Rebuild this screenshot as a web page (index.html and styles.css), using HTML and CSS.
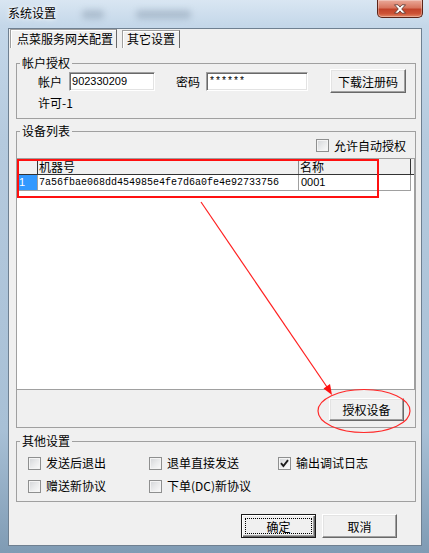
FILE: index.html
```html
<!DOCTYPE html>
<html lang="zh-CN">
<head>
    <meta charset="UTF-8">
    <meta name="viewport" content="width=device-width, initial-scale=1.0">
    <title>系统设置</title>
    <link rel="stylesheet" href="styles.css">
</head>
<body>
    <div class="window">
        <div class="titlebar">
            <span class="title">系统设置</span>
            <span class="smudge smudge-a"></span>
            <span class="smudge smudge-b"></span>
            <button class="close-btn" type="button" aria-label="关闭">
                <svg width="14" height="10" viewBox="0 0 14 10"><path d="M1.5 0.8 H5 L7 3.1 L9 0.8 H12.5 L8.7 5 L12.5 9.2 H9 L7 6.9 L5 9.2 H1.5 L5.3 5 Z" fill="#fff" stroke="#53302a" stroke-width="0.8"/></svg>
            </button>
        </div>

        <div class="client">
            <div class="tabs">
                <span class="tab active">点菜服务网关配置</span>
                <span class="tab">其它设置</span>
            </div>

            <div class="panel">
                <fieldset class="group account">
                    <legend>帐户授权</legend>
                    <div class="account-row">
                        <label for="account">帐户</label>
                        <input id="account" class="field field-account" type="text" value="902330209">
                        <label for="password" class="pwd-label">密码</label>
                        <input id="password" class="field field-pwd" type="text" value="******">
                        <button class="btn btn-download" type="button">下载注册码</button>
                    </div>
                    <div class="license">许可-1</div>
                </fieldset>

                <fieldset class="group devices">
                    <legend>设备列表</legend>
                    <div class="auto-row">
                        <span class="cb"></span>
                        <span>允许自动授权</span>
                    </div>
                    <div class="list">
                        <div class="grid-row grid-head">
                            <span class="cell rowhead"></span>
                            <span class="cell">机器号</span>
                            <span class="cell last">名称</span>
                        </div>
                        <div class="grid-row grid-data">
                            <span class="cell rowhead">1</span>
                            <span class="cell mono">7a56fbae068dd454985e4fe7d6a0fe4e92733756</span>
                            <span class="cell num">0001</span>
                        </div>
                    </div>
                    <div class="auth-row">
                        <button class="btn btn-auth" type="button">授权设备</button>
                    </div>
                </fieldset>

                <fieldset class="group other">
                    <legend>其他设置</legend>
                    <div class="opts">
                        <div class="opt"><span class="cb"></span><span>发送后退出</span></div>
                        <div class="opt"><span class="cb"></span><span>退单直接发送</span></div>
                        <div class="opt">
                            <span class="cb"><svg width="9" height="9" viewBox="0 0 9 9"><path d="M1 4.2 L3.4 7 L8 1.2" fill="none" stroke="#1b1b1b" stroke-width="1.9"/></svg></span>
                            <span>输出调试日志</span>
                        </div>
                        <div class="opt"><span class="cb"></span><span>赠送新协议</span></div>
                        <div class="opt"><span class="cb"></span><span>下单(DC)新协议</span></div>
                    </div>
                </fieldset>

                <div class="actions">
                    <button class="btn btn-ok default" type="button">确定</button>
                    <button class="btn btn-cancel" type="button">取消</button>
                </div>
            </div>
        </div>

        <!-- red marks drawn over the dialog -->
        <svg class="marks" width="429" height="553" viewBox="0 0 429 553">
            <rect x="18" y="160" width="360" height="37" fill="none" stroke="#ff1010" stroke-width="2"/>
            <line x1="201" y1="202" x2="327" y2="387" stroke="#ff2020" stroke-width="1.2"/>
            <polygon points="332,395 323.5,388.5 330,384" fill="#ff1010"/>
            <ellipse cx="364" cy="411" rx="46" ry="21.5" fill="none" stroke="#ff2a2a" stroke-width="1.2"/>
        </svg>
    </div>
</body>
</html>
```

FILE: styles.css
```css
* {
    box-sizing: border-box;
}
body {
    margin: 0;
    font-family: "Noto Sans CJK SC", sans-serif;
    font-size: 12px;
    color: #000;
}
.window {
    position: relative;
    width: 429px;
    height: 553px;
    padding: 0 7px 7px 8px;
    display: flex;
    flex-direction: column;
    background: linear-gradient(180deg, #d9e6f2 0, #c4d7e9 26px, #b5cade 140px, #a8c0d6 430px, #7f9bb4 553px);
}
.titlebar {
    height: 28px;
    display: flex;
    align-items: flex-start;
}
.title {
    margin-top: 5px;
    line-height: 16px;
    text-shadow: 0 0 6px #fff, 0 0 3px #fff;
}
.smudge {
    display: block;
    height: 9px;
    margin-top: 10px;
    background: rgba(95, 115, 140, 0.3);
    filter: blur(3px);
    border-radius: 4px;
}
.smudge-a {
    width: 22px;
    margin-left: 26px;
}
.smudge-b {
    width: 55px;
    margin-left: 32px;
}
.close-btn {
    margin-left: auto;
    margin-right: -1px;
    width: 46px;
    height: 18px;
    padding: 0;
    border: 1px solid #5b2418;
    border-top: none;
    border-radius: 0 0 5px 5px;
    background: linear-gradient(180deg, #eaa999 0, #d8765f 45%, #c2432a 55%, #cd5336 80%, #e48b69 100%);
    box-shadow: inset 0 0 0 1px rgba(255, 255, 255, 0.3);
    display: flex;
    align-items: center;
    justify-content: center;
}
.client {
    flex: 1;
    border: 1px solid #6f8091;
    background: #f0f0f0;
    display: flex;
    flex-direction: column;
}
.tabs {
    display: flex;
    align-items: flex-end;
    gap: 5px;
    height: 19px;
    padding-left: 1px;
}
.tab {
    height: 18px;
    line-height: 16px;
    padding: 0 4px;
    border: 1px solid #a0a0a0;
    border-right-color: #696969;
    border-bottom: none;
    box-shadow: inset 1px 1px #fff;
    background: #f0f0f0;
}
.tab.active {
    height: 19px;
    line-height: 17px;
    padding: 0 3px 0 6px;
}
.panel {
    flex: 1;
    padding: 0 5px 0 7px;
}
.group {
    margin: 0;
    padding: 0;
    min-width: 0;
    border: 1px solid #a0a0a0;
}
.group legend {
    margin-left: 3px;
    padding: 0 2px;
    line-height: 14px;
}
.account {
    margin-top: 8px;
}
.account-row {
    display: flex;
    align-items: center;
    height: 24px;
    margin-top: -1px;
    padding-left: 21px;
}
.field {
    height: 19px;
    padding: 0 2px;
    border: 1px solid;
    border-color: #a0a0a0 #fff #fff #a0a0a0;
    box-shadow: inset 1px 1px #696969, inset -1px -1px #e3e3e3;
    background: #fff;
    font-family: "Liberation Sans", sans-serif;
    font-size: 11px;
    color: #000;
}
.field-account {
    width: 86px;
    margin-left: 7px;
}
.pwd-label {
    margin-left: 21px;
}
.field-pwd {
    width: 102px;
    margin-left: 6px;
    font-family: "Liberation Mono", monospace;
    font-size: 10px;
}
.btn {
    height: 24px;
    padding: 0;
    border: 1px solid;
    border-color: #fff #696969 #696969 #fff;
    box-shadow: inset -1px -1px #a0a0a0, inset 1px 1px #e3e3e3;
    background: #f0f0f0;
    font-family: "Noto Sans CJK SC", sans-serif;
    font-size: 12px;
    color: #000;
}
.btn-download {
    width: 76px;
    margin-left: 22px;
}
.license {
    margin-top: 3px;
    padding: 0 0 8px 21px;
    line-height: 14px;
}
.devices {
    margin-top: 5px;
}
.auto-row {
    display: flex;
    justify-content: flex-end;
    align-items: center;
    gap: 5px;
    height: 14px;
    padding-right: 9px;
}
.cb {
    width: 13px;
    height: 13px;
    flex: none;
    border: 1px solid #8e8f8f;
    background: linear-gradient(135deg, #d2d4d7 0, #e9eaeb 50%, #fbfbfb 100%);
    box-shadow: inset 0 0 0 1px #f4f4f4;
    display: flex;
    align-items: center;
    justify-content: center;
}
.list {
    height: 232px;
    margin-top: 6px;
    background: #fff;
    border: 1px solid #a0a0a0;
    border-left: none;
}
.grid-row {
    display: grid;
    grid-template-columns: 21px 261px 112px;
    height: 16px;
}
.cell {
    padding-left: 1px;
    line-height: 15px;
    white-space: nowrap;
    overflow: hidden;
}
.grid-head {
    background: #f0f0f0;
    border-bottom: 1px solid #333;
}
.grid-head .cell {
    border-right: 1px solid #8a8a8a;
}
.grid-head .rowhead,
.grid-head .last {
    border-right-color: #333;
}
.grid-data .cell {
    border-right: 1px solid #a0a0a0;
    border-bottom: 1px solid #a0a0a0;
}
.grid-data .rowhead {
    padding-left: 2px;
    background: #3399ff;
    color: #fff;
    font-family: "Liberation Sans", sans-serif;
    font-size: 11px;
}
.mono {
    font-family: "Liberation Mono", monospace;
    font-size: 10px;
}
.num {
    padding-left: 2px;
    font-family: "Liberation Sans", sans-serif;
    font-size: 11px;
}
.auth-row {
    display: flex;
    justify-content: flex-end;
    margin-top: 8px;
    padding: 0 11px 6px 0;
}
.btn-auth {
    width: 75px;
    height: 23px;
}
.other {
    margin-top: 6px;
}
.opts {
    display: grid;
    grid-template-columns: 121px 129px auto;
    row-gap: 9px;
    padding: 8px 0 8px 11px;
}
.opt {
    display: flex;
    align-items: center;
    gap: 5px;
    height: 14px;
    line-height: 14px;
}
.actions {
    display: flex;
    justify-content: flex-end;
    gap: 6px;
    margin-top: 12px;
    padding-right: 19px;
}
.btn-ok,
.btn-cancel {
    width: 75px;
}
.btn.default {
    border-color: #1a1a1a;
    box-shadow: inset 1px 1px #fff, inset -1px -1px #696969, inset -2px -2px #a0a0a0;
    outline: 1px dotted #000;
    outline-offset: -5px;
}
.marks {
    position: absolute;
    left: 0;
    top: 0;
    pointer-events: none;
}
```
